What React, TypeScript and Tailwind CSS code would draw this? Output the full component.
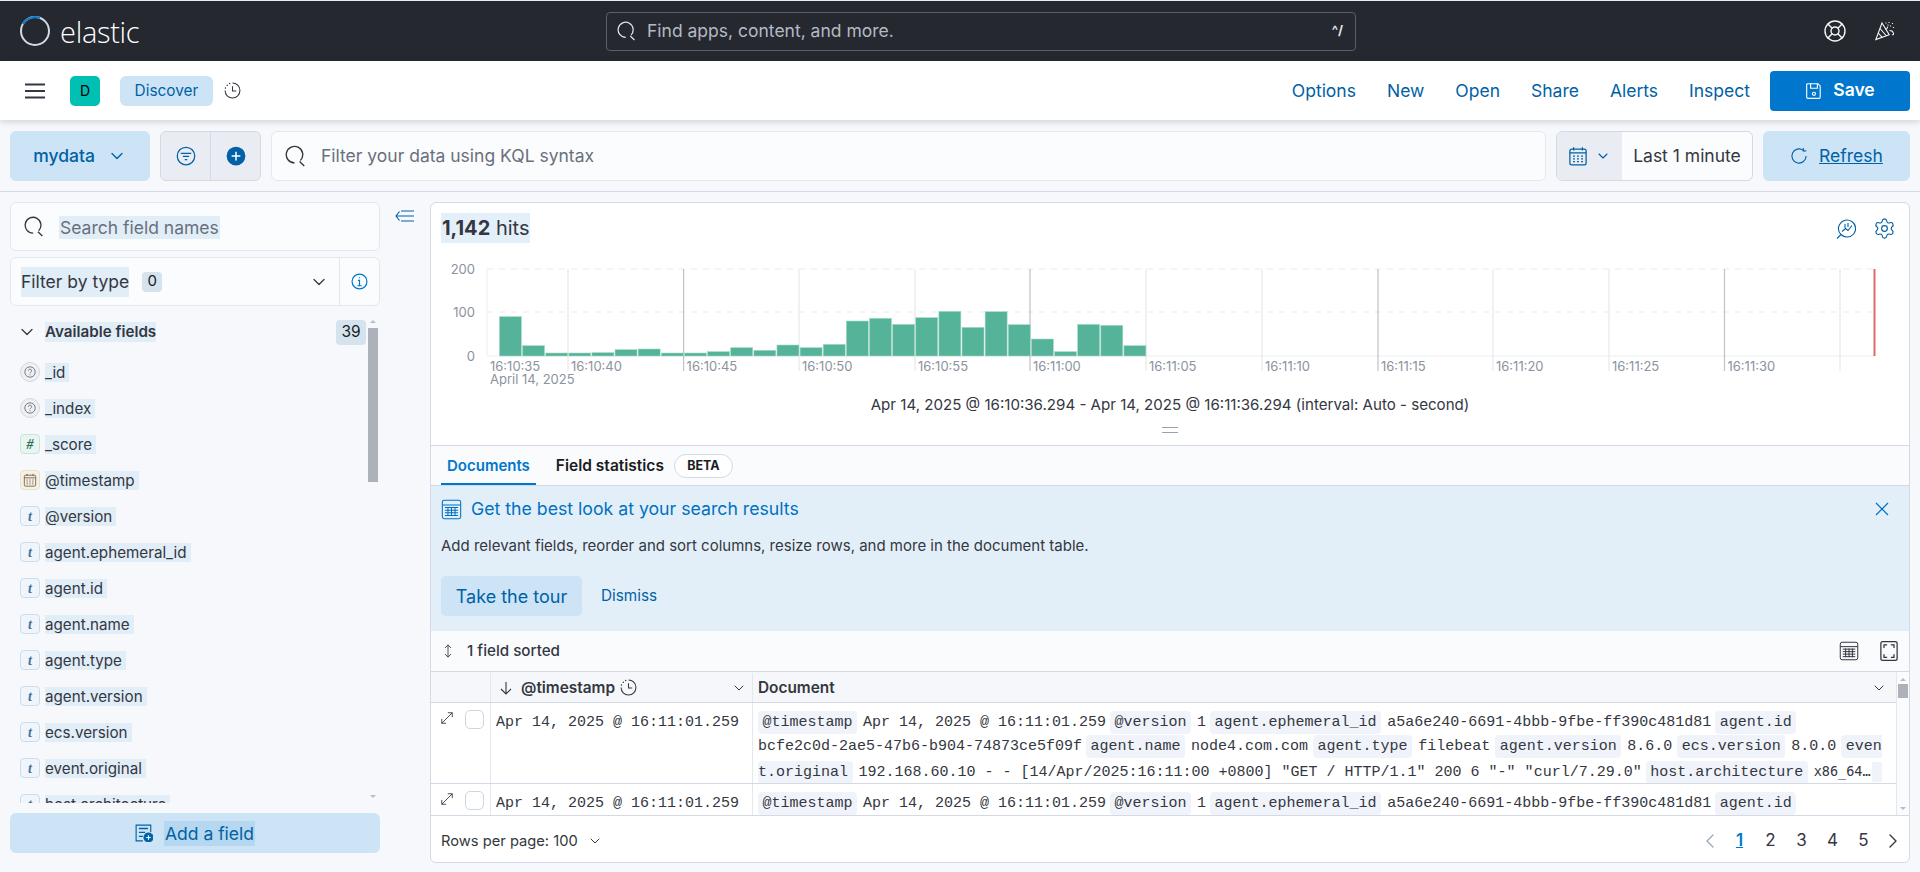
import { ChevronDown, ChevronLeft, ChevronRight, LifeBuoy, Settings } from 'lucide-react';
import type { ReactNode } from 'react';

const FIELDS: [string, string][] = [
  ['q', '_id'],
  ['q', '_index'],
  ['n', '_score'],
  ['d', '@timestamp'],
  ['t', '@version'],
  ['t', 'agent.ephemeral_id'],
  ['t', 'agent.id'],
  ['t', 'agent.name'],
  ['t', 'agent.type'],
  ['t', 'agent.version'],
  ['t', 'ecs.version'],
  ['t', 'event.original'],
  ['t', 'host.architecture'],
];

const BAR_TOPS = [350, 437, 459, 459, 458, 449, 447, 459, 459, 455, 443, 451, 435, 443, 433, 363, 355, 373, 353, 334, 382, 335, 374, 417, 455, 373, 376, 437];
const TICKS = [568, 683.6, 799, 915, 1030, 1146, 1262, 1378, 1493, 1609, 1724.5, 1840];
const TICK_LABELS = ['16:10:40', '16:10:45', '16:10:50', '16:10:55', '16:11:00', '16:11:05', '16:11:10', '16:11:15', '16:11:20', '16:11:25', '16:11:30'];

function SearchIcon({ size = 20, className = 'text-[#343741]' }: { size?: number; className?: string }) {
  return (
    <svg width={size} height={size} viewBox="0 0 16 16" fill="none" stroke="currentColor" strokeWidth="1" className={className}>
      <path d="M11.2 11.2A6 6 0 1 0 7 13" />
      <path d="M10.6 12l3.4 3.2" />
    </svg>
  );
}

function FieldToken({ kind }: { kind: string }) {
  if (kind === 'q') {
    return (
      <span className="flex h-5 w-5 items-center justify-center rounded-full border border-[#d3d6dc] bg-[#eef0f3]">
        <svg width="12" height="12" viewBox="0 0 12 12" fill="none" stroke="#69707d" strokeWidth="0.9">
          <circle cx="6" cy="6" r="5.2" />
          <path d="M4.4 4.7a1.6 1.6 0 1 1 2.3 1.5c-.5.3-.7.5-.7 1.1M6 8.4v.9" />
        </svg>
      </span>
    );
  }
  if (kind === 'n') {
    return (
      <span className="flex h-5 w-5 items-center justify-center rounded-[4px] border border-[#c4e6da] bg-[#e8f5f0] font-['Liberation_Serif',serif] text-[14px] font-bold italic text-[#2f6f5c]">
        #
      </span>
    );
  }
  if (kind === 'd') {
    return (
      <span className="flex h-5 w-5 items-center justify-center rounded-[4px] border border-[#eadfc9] bg-[#f7f1e4]">
        <CalendarIcon size={14} className="text-[#69604d]" />
      </span>
    );
  }
  return (
    <span className="flex h-5 w-5 items-center justify-center rounded-[4px] border border-[#c8dcee] bg-[#eff5fb] font-['Liberation_Serif',serif] text-[14px] font-bold italic text-[#4a7194]">
      t
    </span>
  );
}

function CalendarIcon({ size = 18, className = '' }: { size?: number; className?: string }) {
  return (
    <svg width={size} height={size} viewBox="0 0 16 16" fill="none" stroke="currentColor" strokeWidth="1" className={className}>
      <rect x="1.5" y="2.5" width="13" height="12.5" rx="1.5" />
      <path d="M1.5 5.5h13M4.5 1v2.5M11.5 1v2.5" />
      <path d="M4 8h1.5M7.2 8h1.5M10.5 8H12M4 10.2h1.5M7.2 10.2h1.5M10.5 10.2H12M4 12.4h1.5M7.2 12.4h1.5M10.5 12.4H12" />
    </svg>
  );
}

function TableIcon({ size = 20, className = '' }: { size?: number; className?: string }) {
  return (
    <svg width={size} height={size} viewBox="0 0 16 16" fill="none" stroke="currentColor" strokeWidth="0.8" className={className}>
      <rect x="1" y="1" width="14" height="14" rx="1.5" />
      <path d="M1 4.5h14M3 6.5h10M3 8.5h10M3 10.5h10M3 12.5h10M5.3 6v7M8 6v7M10.7 6v7" />
    </svg>
  );
}

function ClockIcon({ size = 17, className = '' }: { size?: number; className?: string }) {
  return (
    <svg width={size} height={size} viewBox="0 0 16 16" fill="none" stroke="currentColor" strokeWidth="1" className={className}>
      <path d="M8 1a7 7 0 1 1-7 7" />
      <path d="M8 4v4.5h3.5" />
      <path d="M1.3 5.6l.1.1M3 3l.1.1M5.3 1.4l.1.1" strokeLinecap="round" strokeWidth="1.3" />
    </svg>
  );
}

function TopBar() {
  return (
    <div className="flex h-[61px] shrink-0 items-center border-t border-[#e9edf3] bg-[#25282f]">
      <div className="ml-[20px] flex w-[586px] items-center gap-[10px]">
        <svg width="30" height="30" viewBox="0 0 30 30" fill="none" strokeWidth="2">
          <circle cx="15" cy="15" r="14" stroke="#d3dae6" />
          <path d="M3 8A14 14 0 0 1 20 2" stroke="#0b7dd1" />
        </svg>
        <span className="font-['Open_Sans',sans-serif] text-[29px] font-light leading-none tracking-[-0.3px] text-white">elastic</span>
      </div>
      <div className="flex h-[39px] w-[750px] items-center rounded-[4px] border border-[#5a5f6b] pl-[10px] pr-[12px]">
        <SearchIcon size={20} className="text-[#dfe5ef]" />
        <span className="ml-[10px] flex-1 text-[17.5px] text-[#b4bac5]">Find apps, content, and more.</span>
        <span className="text-[13px] font-bold text-[#dfe5ef]">^/</span>
      </div>
      <LifeBuoy size={24} strokeWidth={1.4} className="ml-[467px] text-[#f5f7fa]" />
      <svg width="20" height="20" viewBox="0 0 20 20" fill="none" stroke="#f5f7fa" strokeWidth="1.1" className="ml-[28px]">
        <path d="M7 2L.8 18.6l13.4-4.8z" />
        <path d="M5 7.5l6.5 7.5M3.2 12l4.2 4.6" />
        <path d="M10.5 8.5c1.5-.3 2-1.5 2.3-3M14.5 9.5c1.5 0 3.5.5 4 3 .2 1-.5 1.5-1.5 1.2" />
        <path d="M11 1.5v1M14 1v1M17.5 2v1M15.5 4.5v1M18.5 6v1M13 3.5v1" strokeDasharray="1 1" />
      </svg>
    </div>
  );
}

function NavBar() {
  return (
    <div className="relative z-10 flex h-[59px] shrink-0 items-center bg-white pl-[25px] pr-[10px] shadow-[0_2px_6px_rgba(65,78,101,0.22)]">
      <svg width="20" height="16" viewBox="0 0 20 16" fill="none" stroke="#343741" strokeWidth="2">
        <path d="M0 1.5h20M0 8h20M0 14.5h20" />
      </svg>
      <span className="ml-[25px] flex h-[30px] w-[30px] items-center justify-center rounded-[5px] bg-[#00bfb3] text-[14px] text-black">D</span>
      <span className="ml-[20px] flex h-[30px] w-[93px] items-center justify-center rounded-[6px] bg-[#cce4f5] text-[15.4px] text-[#0061a6]">Discover</span>
      <ClockIcon className="ml-[11px] text-[#343741]" />
      <div className="flex-1" />
      <div className="flex items-center gap-[31px] pt-[2px] text-[17.5px] text-[#0061a6]">
        <span>Options</span>
        <span>New</span>
        <span>Open</span>
        <span>Share</span>
        <span>Alerts</span>
        <span>Inspect</span>
      </div>
      <span className="ml-[20px] flex h-[40px] w-[140px] items-center justify-center gap-[10px] rounded-[4px] bg-[#0077cc] text-[17.5px] font-semibold text-white">
        <svg width="18" height="18" viewBox="0 0 16 16" fill="none" stroke="currentColor" strokeWidth="1">
          <path d="M2.5 1.5h9l2 2v10a1 1 0 0 1-1 1h-10a1 1 0 0 1-1-1v-11a1 1 0 0 1 1-1z" />
          <path d="M5 1.5v4h6v-4" />
          <circle cx="8" cy="10.5" r="1.4" />
        </svg>
        Save
      </span>
    </div>
  );
}

function QueryBar() {
  return (
    <div className="flex h-[72px] shrink-0 items-start gap-[10px] border-b border-[#d3dae6] px-[10px] pt-[11px]">
      <div className="flex h-[50px] w-[140px] items-center justify-center gap-[12px] rounded-[6px] bg-[#cce4f5] text-[17.5px] font-medium text-[#0061a6]">
        mydata
        <ChevronDown size={20} strokeWidth={1.6} />
      </div>
      <div className="flex h-[50px] w-[101px] rounded-[6px] border border-[#d3dae6] bg-[#e9edf3]">
        <div className="flex w-[50px] items-center justify-center border-r border-[#d3dae6]">
          <svg width="20" height="20" viewBox="0 0 16 16" fill="none" stroke="#0061a6" strokeWidth="1">
            <circle cx="8" cy="8" r="7" />
            <path d="M3.8 5.8h8.4M5.5 8.3h5M7 10.8h2" />
          </svg>
        </div>
        <div className="flex flex-1 items-center justify-center">
          <svg width="20" height="20" viewBox="0 0 16 16">
            <circle cx="8" cy="8" r="7.5" fill="#0061a6" />
            <path d="M8 4.5v7M4.5 8h7" stroke="#fff" strokeWidth="1.2" />
          </svg>
        </div>
      </div>
      <div className="flex h-[50px] flex-1 items-center rounded-[6px] border border-[#e3e8f0] bg-[#fbfcfd] pl-[13px]">
        <SearchIcon size={22} />
        <span className="ml-[14px] text-[17.5px] text-[#69707d]">Filter your data using KQL syntax</span>
      </div>
      <div className="flex h-[50px] w-[197px] overflow-hidden rounded-[6px] border border-[#d3dae6] bg-[#fbfcfd]">
        <div className="flex w-[65px] items-center gap-[7px] bg-[#e9edf3] pl-[11px] text-[#0061a6]">
          <CalendarIcon size={20} />
          <ChevronDown size={16} strokeWidth={1.6} />
        </div>
        <span className="flex flex-1 items-center justify-center text-[17.5px] text-[#343741]">Last 1 minute</span>
      </div>
      <div className="flex h-[50px] w-[147px] items-center justify-center gap-[11px] rounded-[6px] bg-[#cce4f5] text-[17.5px] text-[#0061a6]">
        <svg width="18" height="18" viewBox="0 0 16 16" fill="none" stroke="currentColor" strokeWidth="1">
          <path d="M11.8 3A6.3 6.3 0 1 0 14.3 8" />
          <path d="M11.8.8V3.4H14.4" />
        </svg>
        <span className="underline">Refresh</span>
      </div>
    </div>
  );
}

function Sel({ children, className = '' }: { children: ReactNode; className?: string }) {
  return <span className={`bg-[#e1edf7] ${className}`}>{children}</span>;
}

function Sidebar() {
  return (
    <div className="flex w-[430px] shrink-0 pl-[10px] pt-[10px]">
      <div className="flex h-[651px] w-[370px] flex-col">
        <div className="flex h-[49px] items-center rounded-[6px] border border-[#e3e8f0] bg-[#fbfcfd] pl-[13px]">
          <SearchIcon size={21} />
          <Sel className="ml-[14px] mt-[2px] px-[1px] py-[1px] text-[17.5px] leading-[21px] text-[#69707d]">Search field names</Sel>
        </div>
        <div className="mt-[6px] flex h-[49px] items-center rounded-[6px] border border-[#e3e8f0] bg-[#fbfcfd] pl-[10px]">
          <Sel className="py-[3px] text-[17.5px] leading-[24px] text-[#343741]">Filter by type</Sel>
          <span className="ml-[13px] flex h-[20px] w-[20px] items-center justify-center rounded-[4px] bg-[#d5e3ef] text-[15px] text-[#1a1c21]">0</span>
          <ChevronDown size={20} strokeWidth={1.5} className="ml-auto text-[#343741]" />
          <div className="ml-[10px] flex h-full w-[40px] items-center justify-center border-l border-[#e3e8f0]">
            <svg width="17" height="17" viewBox="0 0 16 16" fill="none" stroke="#0077cc" strokeWidth="1.1">
              <circle cx="8" cy="8" r="7" />
              <path d="M8 4v1M6.5 7H8v5M6 12h4" />
            </svg>
          </div>
        </div>
        <div className="mt-[8px] flex min-h-0 flex-1">
          <div className="min-w-0 flex-1 overflow-hidden">
            <div className="flex h-[36px] items-center pl-[7px] pr-[2px]">
              <ChevronDown size={20} strokeWidth={1.5} className="text-[#343741]" />
              <Sel className="ml-[8px] text-[15.2px] font-semibold leading-[20px] text-[#343741]">Available fields</Sel>
              <span className="ml-auto flex h-[25px] w-[30px] items-center justify-center rounded-[4px] bg-[#d5e3ef] text-[15.5px] text-[#1a1c21]">39</span>
            </div>
            <div className="mt-[4px]">
              {FIELDS.map(([kind, name]) => (
                <div key={name} className="flex h-[36px] items-center pl-[10px]">
                  <FieldToken kind={kind} />
                  <Sel className="ml-[5px] pr-[4px] text-[15.2px] leading-[19px] text-[#343741]">{name}</Sel>
                </div>
              ))}
            </div>
          </div>
          <div className="mr-[2px] flex w-[10px] flex-col items-center pt-[6px]">
            <div className="h-0 w-0 border-x-[3px] border-b-[3px] border-x-transparent border-b-[#b8bcc4]" />
            <div className="mt-[5px] h-[154px] w-[10px] bg-[#adb1ba]" />
            <div className="mb-[5px] mt-auto h-0 w-0 border-x-[3px] border-t-[3px] border-x-transparent border-t-[#b8bcc4]" />
          </div>
        </div>
        <div className="mt-[10px] flex h-[40px] shrink-0 items-center justify-center rounded-[6px] bg-[#cce4f5] text-[17.5px] text-[#0061a6]">
          <svg width="18" height="18" viewBox="0 0 16 16" fill="none" stroke="currentColor" strokeWidth="1">
            <path d="M14 7V1H1v14h6" />
            <path d="M3.5 4h8M3.5 7.5H9M3.5 11H7" strokeWidth="1.2" />
            <circle cx="12" cy="12" r="4" fill="currentColor" />
            <path d="M12 10v4M10 12h4" stroke="#fff" />
          </svg>
          <span className="ml-[11px] bg-[#b5d7f0] px-[1px] py-[2px] leading-[21px]">Add a field</span>
        </div>
      </div>
      <svg width="20" height="16" viewBox="0 0 20 16" fill="none" stroke="#0061a6" strokeWidth="1.1" className="ml-[15px] mt-[6px]">
        <path d="M4.5 3.5L1 8l3.5 4.5M1 8h18M6 3h13M6 13h13" />
      </svg>
    </div>
  );
}

function Histogram() {
  return (
    <svg width="1478" height="130" viewBox="431 262 1478 130" className="block">
      <path d="M487 269H1875M487 312H1875" stroke="#e9ebef" strokeDasharray="6 6" />
      <path d="M487 356H1875M487 269V356" stroke="#eceef1" />
      {TICKS.map((x, i) => (
        <path key={x} d={`M${x} 269V371`} stroke={i % 3 === 1 ? '#bfc2c7' : '#e6e8eb'} strokeWidth="1.2" />
      ))}
      {BAR_TOPS.map((top, i) => (
        <rect key={i} x={499.4 + i * 23.13} y={200 + top / 3} width={22} height={356 - (200 + top / 3)} fill="#54b399" stroke="#a8d9c8" strokeWidth="0.6" />
      ))}
      <path d="M1874.5 269V356" stroke="#dd6b6b" strokeWidth="2" />
      <g fontFamily="Inter, sans-serif" fontSize="13" fill="#8b92a0">
        <text x="475" y="274" textAnchor="end">200</text>
        <text x="475" y="317" textAnchor="end">100</text>
        <text x="475" y="361" textAnchor="end">0</text>
        <text x="490" y="371">16:10:35</text>
        <text x="490" y="384">April 14, 2025</text>
        {TICK_LABELS.map((label, i) => (
          <text key={label} x={TICKS[i] + 3} y="371">{label}</text>
        ))}
      </g>
    </svg>
  );
}

function Chip({ children, className = 'pl-[4.5px]' }: { children: ReactNode; className?: string }) {
  return <span className={`mr-[6px] rounded-[4px] bg-[#f0f4fa] py-[3px] pr-[4.5px] ${className}`}>{children}</span>;
}

function Val({ children, className = 'mr-[4px]' }: { children: ReactNode; className?: string }) {
  return <span className={className}>{children}</span>;
}

function Line1() {
  return (
    <div className="h-[24px] whitespace-pre">
      <Chip>@timestamp</Chip>
      <Val>Apr 14, 2025 @ 16:11:01.259</Val>
      <Chip>@version</Chip>
      <Val>1</Val>
      <Chip>agent.ephemeral_id</Chip>
      <Val>a5a6e240-6691-4bbb-9fbe-ff390c481d81</Val>
      <Chip>agent.id</Chip>
    </div>
  );
}

function TableRow({ full }: { full?: boolean }) {
  return (
    <div className={`flex border-b border-[#d3dae6] ${full ? 'h-[81px]' : 'h-[32px]'}`}>
      <div className="flex w-[60px] shrink-0 gap-[11px] border-r border-[#e3e8f0] pl-[9px] pt-[7px]">
        <svg width="14" height="14" viewBox="0 0 16 16" fill="none" stroke="#343741" strokeWidth="1" className="mt-[1px]">
          <path d="M2 14L14 2M9 2h5v5M2 9v5h5" />
        </svg>
        <span className="h-[19px] w-[19px] rounded-[5px] border border-[#cfd5de] bg-white" />
      </div>
      <div className="w-[262px] shrink-0 border-r border-[#e3e8f0] pl-[5px] pt-[8px] leading-[24px]">Apr 14, 2025 @ 16:11:01.259</div>
      <div className="min-w-0 flex-1 overflow-hidden pl-[5px] pr-[8px] pt-[8px] leading-[24px]">
        <Line1 />
        {full && (
          <>
            <div className="h-[24px] whitespace-pre">
              <Val>bcfe2c0d-2ae5-47b6-b904-74873ce5f09f</Val>
              <Chip>agent.name</Chip>
              <Val className="mr-[5px]">node4.com.com</Val>
              <Chip>agent.type</Chip>
              <Val className="mr-[5px]">filebeat</Val>
              <Chip>agent.version</Chip>
              <Val className="mr-[5px]">8.6.0</Val>
              <Chip>ecs.version</Chip>
              <Val className="mr-[5px]">8.0.0</Val>
              <span className="rounded-l-[4px] bg-[#f0f4fa] py-[3px] pl-[4.5px]">even</span>
            </div>
            <div className="h-[24px] whitespace-pre">
              <Chip className="pl-0">t.original</Chip>
              <Val>192.168.60.10 - - [14/Apr/2025:16:11:00 +0800] "GET / HTTP/1.1" 200 6 "-" "curl/7.29.0"</Val>
              <Chip>host.architecture</Chip>
              <span className="font-['DejaVu_Sans_Mono',monospace] text-[13.5px]">x86_64…</span>
              <span className="ml-[1px] inline-block h-[20px] w-[10px] bg-[#f0f4fa] align-middle" />
            </div>
          </>
        )}
      </div>
    </div>
  );
}

function DocTable() {
  return (
    <div className="flex h-[145px] shrink-0 border-y border-[#d3dae6] font-['Liberation_Mono',monospace] text-[15px] text-[#343741]">
      <div className="min-w-0 flex-1 overflow-hidden border-r border-[#e3e8f0] bg-white">
        <div className="flex h-[31px] border-b border-[#d3dae6] bg-[#f5f7fa] pt-[1px] font-['Inter',sans-serif] text-[15.4px] font-semibold">
          <div className="w-[60px] shrink-0 border-r border-[#e3e8f0]" />
          <div className="flex w-[262px] shrink-0 items-center border-r border-[#e3e8f0] pl-[7px] pr-[5px]">
            <svg width="16" height="16" viewBox="0 0 16 16" fill="none" stroke="#343741" strokeWidth="1.1">
              <path d="M8 2v12M3 9l5 5 5-5" />
            </svg>
            <span className="ml-[7px]">@timestamp</span>
            <ClockIcon size={17} className="ml-[5px] text-[#343741]" />
            <ChevronDown size={16} strokeWidth={1.5} className="ml-auto" />
          </div>
          <div className="flex flex-1 items-center pl-[5px] pr-[9px]">
            <span>Document</span>
            <ChevronDown size={16} strokeWidth={1.5} className="ml-auto" />
          </div>
        </div>
        <TableRow full />
        <TableRow />
      </div>
      <div className="flex w-[12px] shrink-0 flex-col items-center bg-[#fafbfd] pt-[6px]">
        <div className="h-0 w-0 border-x-[3px] border-b-[3px] border-x-transparent border-b-[#b8bcc4]" />
        <div className="mt-[3px] h-[14px] w-[10px] bg-[#adb1ba]" />
        <div className="mb-[5px] mt-auto h-0 w-0 border-x-[3px] border-t-[3px] border-x-transparent border-t-[#b8bcc4]" />
      </div>
    </div>
  );
}

function MainPanel() {
  return (
    <div className="mr-[10px] mt-[10px] flex h-[661px] min-w-0 flex-1 flex-col overflow-hidden rounded-[6px] border border-[#d3dae6] bg-white">
      <div className="flex h-[59px] shrink-0 items-start justify-between pl-[10px] pr-[13px] pt-[10px]">
        <span className="bg-[#e4f0f9] px-[1px] text-[20px] leading-[30px] text-[#343741]">
          <b className="font-bold">1,142</b> hits
        </span>
        <div className="flex items-center gap-[17px] pt-[4px] text-[#0061a6]">
          <svg width="20" height="20" viewBox="0 0 20 20" fill="none" stroke="currentColor" strokeWidth="1.1">
            <path d="M5 15.5A8.5 8.5 0 1 0 3.6 5.5 8.5 8.5 0 0 0 5 15.5z" />
            <path d="M5 15.5L1 19.5" />
            <path d="M9 5v4M12 4v4M6 12.5l3.5-3 2.5 2 4-5" />
          </svg>
          <Settings size={23} strokeWidth={1.2} />
        </div>
      </div>
      <Histogram />
      <div className="flex h-[26px] shrink-0 items-center justify-center text-[15.1px] text-[#343741]">
        Apr 14, 2025 @ 16:10:36.294 - Apr 14, 2025 @ 16:11:36.294 (interval: Auto - second)
      </div>
      <div className="flex h-[27px] shrink-0 items-center justify-center pb-[4px]">
        <div className="h-[6px] w-[16px] border-y border-[#98a2b3]" />
      </div>
      <div className="flex h-[41px] shrink-0 items-end border-y border-[#d3dae6] bg-[#fafbfd] pl-[10px]">
        <div className="flex h-[39px] items-center border-b-2 border-[#0077cc] px-[6px] pt-[3px] text-[15px] font-semibold text-[#0077cc]">Documents</div>
        <div className="ml-[20px] flex h-[39px] items-center pb-[1px] pt-[2px] text-[15.5px] font-semibold text-[#1a1c21]">Field statistics</div>
        <span className="mb-[7px] ml-[10px] flex h-[24px] w-[59px] items-center justify-center rounded-full border border-[#d3dae6] bg-white text-[12.5px] font-bold text-[#1a1c21]">BETA</span>
      </div>
      <div className="h-[145px] shrink-0 bg-[#e3eff8] pl-[10px] pr-[19px] pt-[10px]">
        <div className="flex items-center justify-between">
          <div className="flex items-center gap-[9px] text-[17.7px] leading-[26px] text-[#0071c2]">
            <TableIcon size={21} />
            <span>Get the best look at your search results</span>
          </div>
          <svg width="16" height="16" viewBox="0 0 16 16" fill="none" stroke="#0071c2" strokeWidth="1.2">
            <path d="M2 2l12 12M14 2L2 14" />
          </svg>
        </div>
        <div className="mt-[14px] text-[15px] leading-[20px] text-[#343741]">Add relevant fields, reorder and sort columns, resize rows, and more in the document table.</div>
        <div className="mt-[20px] flex items-center">
          <span className="flex h-[40px] w-[141px] items-center justify-center rounded-[5px] bg-[#cce4f5] text-[18px] text-[#0061a6]">Take the tour</span>
          <span className="ml-[19px] text-[15.3px] text-[#0061a6]">Dismiss</span>
        </div>
      </div>
      <div className="flex h-[40px] shrink-0 items-center bg-[#fafbfd] pl-[11px] pr-[10px] text-[15.2px] font-medium text-[#343741]">
        <svg width="12" height="14" viewBox="0 0 12 16" fill="none" stroke="#343741" strokeWidth="1">
          <path d="M6 1v14M2.5 4.5L6 1l3.5 3.5M2.5 11.5L6 15l3.5-3.5" />
        </svg>
        <span className="ml-[13px]">1 field sorted</span>
        <TableIcon size={20} className="ml-auto text-[#343741]" />
        <svg width="20" height="20" viewBox="0 0 16 16" fill="none" stroke="#343741" strokeWidth="1" className="ml-[20px]">
          <rect x="1.5" y="0.5" width="13" height="15" rx="1.5" />
          <path d="M4 5.5V3h2.5M12 5.5V3H9.5M4 10.5V13h2.5M12 10.5V13H9.5" />
        </svg>
      </div>
      <DocTable />
      <div className="flex min-h-0 flex-1 items-center pl-[10px] pr-[4px] pt-[4px] text-[14.7px] text-[#343741]">
        <span>Rows per page: 100</span>
        <ChevronDown size={16} strokeWidth={1.5} className="ml-[9px]" />
        <ChevronLeft size={24} strokeWidth={1.2} className="ml-auto text-[#98a2b3]" />
        <span className="ml-[11px] w-[13px] text-center text-[17px] font-semibold text-[#0077cc] underline">1</span>
        <span className="ml-[18px] w-[13px] text-center text-[17px]">2</span>
        <span className="ml-[18px] w-[13px] text-center text-[17px]">3</span>
        <span className="ml-[18px] w-[13px] text-center text-[17px]">4</span>
        <span className="ml-[18px] w-[13px] text-center text-[17px]">5</span>
        <ChevronRight size={24} strokeWidth={1.4} className="ml-[11px]" />
      </div>
    </div>
  );
}

export default function App() {
  return (
    <div className="flex h-[872px] w-[1920px] flex-col overflow-hidden bg-[#f7f8fc] font-['Inter',sans-serif]">
      <TopBar />
      <NavBar />
      <QueryBar />
      <div className="flex min-h-0 flex-1">
        <Sidebar />
        <MainPanel />
      </div>
    </div>
  );
}
